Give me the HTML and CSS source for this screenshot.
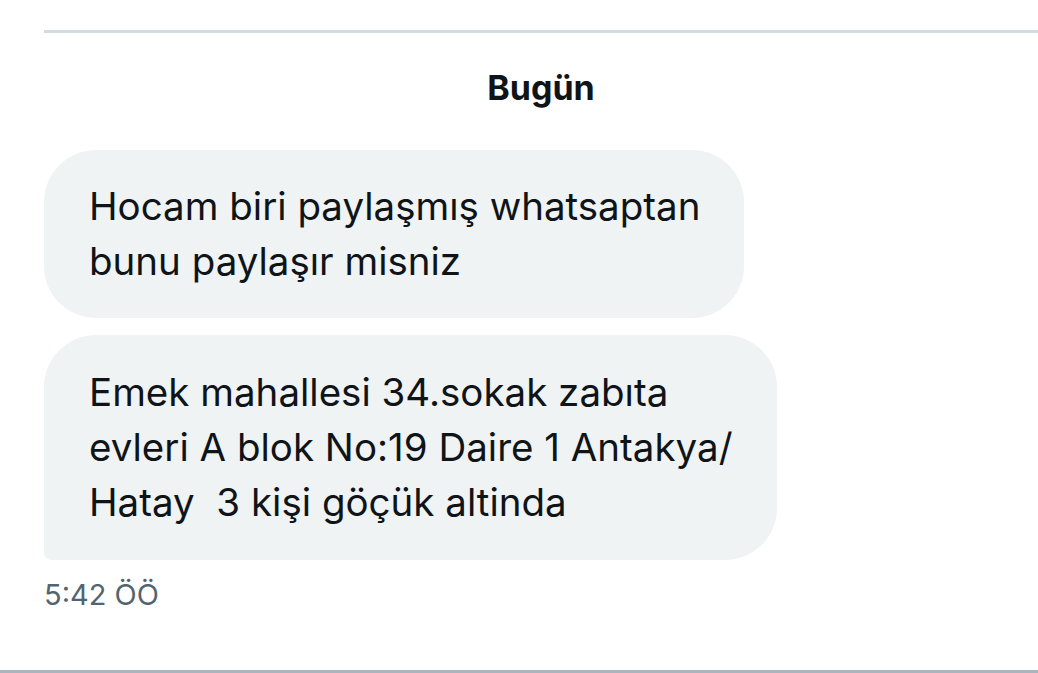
FILE: index.html
```html
<!DOCTYPE html>
<html lang="tr">
<head>
    <meta charset="UTF-8">
    <title>Mesajlar</title>
    <link rel="stylesheet" href="styles.css">
</head>
<body>
    <div class="thread">
        <div class="divider"></div>
        <div class="day">Bugün</div>
        <div class="messages">
            <div class="bubble first">Hocam biri paylaşmış whatsaptan<br>bunu paylaşır misniz</div>
            <div class="bubble last">Emek mahallesi 34.sokak zabıta<br>evleri A blok No:19 Daire 1 Antakya/<br>Hatay&nbsp; 3 kişi göçük altinda</div>
        </div>
        <div class="time">5:42 ÖÖ</div>
    </div>
    <div class="bottom-line"></div>
</body>
</html>
```
FILE: styles.css
```css
* {
    margin: 0;
    padding: 0;
    box-sizing: border-box;
}

body {
    background: #ffffff;
    font-family: Inter, "Noto Sans", sans-serif;
    color: #0f1419;
    width: 1038px;
    height: 673px;
    overflow: hidden;
    display: flex;
    flex-direction: column;
}

.thread {
    flex: 1;
    padding: 30px 0 0 44px;
}

.divider {
    height: 3px;
    background: #d4dbe0;
}

.day {
    text-align: center;
    font-size: 34px;
    font-weight: 700;
    line-height: 40px;
    margin-top: 35px;
    color: #0f1419;
}

.messages {
    margin-top: 42px;
    display: flex;
    flex-direction: column;
    align-items: flex-start;
    gap: 17px;
}

.bubble {
    background: #eff3f4;
    font-size: 38.5px;
    line-height: 55px;
    padding: 29px 44px 29px 45px;
    border-radius: 52px;
    white-space: nowrap;
}

.bubble.last {
    border-bottom-left-radius: 8px;
    padding-top: 30px;
    padding-bottom: 30px;
}

.time {
    margin-top: 18px;
    font-size: 29px;
    line-height: 34px;
    color: #536471;
}

.bottom-line {
    height: 3px;
    background: #aab6bf;
}
```
